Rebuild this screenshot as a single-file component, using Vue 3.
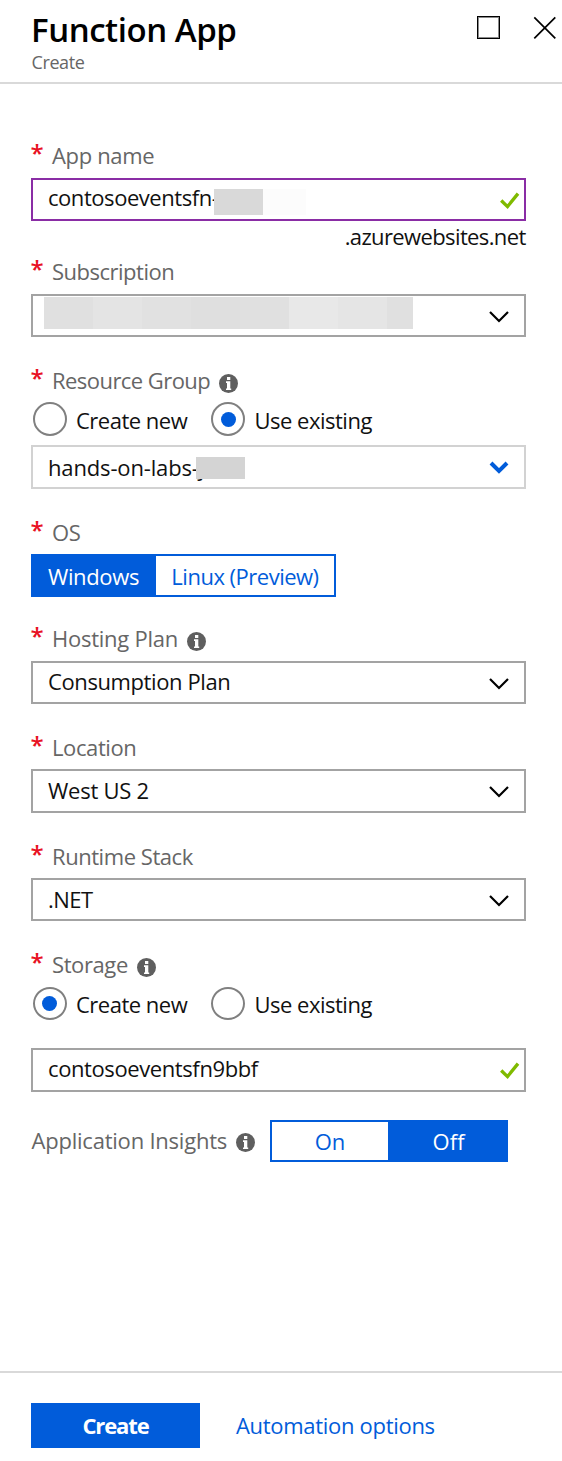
<script setup>
const chevron = 'M2 2 L11 11 L20 2'
const infoGlyph = 'M8 3h3.3v3H8zM7 7.3h4.3v7.2h.9v1.5H7v-1.5h1V9H7z'
</script>

<template>
  <div class="blade">
    <header class="head">
      <div>
        <h1><span class="t-title">Function App</span></h1>
        <p class="sub"><span class="t-sub">Create</span></p>
      </div>
      <div class="window-actions">
        <i class="maximize"></i>
        <svg class="close" width="24" height="24" viewBox="0 0 24 24"><path d="M1.3 1.3 L22.3 22.3 M22.3 1.3 L1.3 22.3" /></svg>
      </div>
    </header>

    <main>
      <section class="field f-name">
        <label><b class="star">*</b><span class="t-appname">App name</span></label>
        <div class="box focus v-name">
          <span class="t-fn">contosoeventsfn-</span>
          <i class="mask mask-name"></i>
          <svg class="check" width="20" height="18" viewBox="0 0 20 18"><path d="M1.2 8.5 L7.5 14.6 L18 1.6" /></svg>
        </div>
        <div class="suffix"><span class="t-suffix">.azurewebsites.net</span></div>
      </section>

      <section class="field f-subscription">
        <label><b class="star">*</b><span class="t-subscription">Subscription</span></label>
        <div class="box">
          <i class="mask mask-subscription"></i>
          <svg class="chev" width="22" height="13" viewBox="0 0 22 13"><path :d="chevron" /></svg>
        </div>
      </section>

      <section class="field f-group">
        <label><b class="star">*</b><span class="t-rg">Resource Group</span>
          <svg class="info" width="19" height="19" viewBox="0 0 19 19"><circle cx="9.5" cy="9.5" r="9.5" /><path :d="infoGlyph" /></svg>
        </label>
        <div class="radios">
          <i class="radio"></i><span class="t-cn">Create new</span>
          <i class="radio on"></i><span class="t-ue">Use existing</span>
        </div>
        <div class="box pale v-group">
          <span class="t-hands">hands-on-labs-j</span>
          <i class="mask mask-group"></i>
          <svg class="chev bold" width="20" height="14" viewBox="0 0 20 14"><path d="M2 2 L10 10 L18 2" /></svg>
        </div>
      </section>

      <section class="field f-os">
        <label><b class="star">*</b><span class="t-os">OS</span></label>
        <div class="toggle os">
          <span class="seg active"><span class="t-win">Windows</span></span>
          <span class="seg"><span class="t-linux">Linux (Preview)</span></span>
        </div>
      </section>

      <section class="field f-hosting">
        <label><b class="star">*</b><span class="t-host">Hosting Plan</span>
          <svg class="info" width="19" height="19" viewBox="0 0 19 19"><circle cx="9.5" cy="9.5" r="9.5" /><path :d="infoGlyph" /></svg>
        </label>
        <div class="box v-hosting">
          <span class="t-cons">Consumption Plan</span>
          <svg class="chev" width="22" height="13" viewBox="0 0 22 13"><path :d="chevron" /></svg>
        </div>
      </section>

      <section class="field f-location">
        <label><b class="star">*</b><span class="t-loc">Location</span></label>
        <div class="box tall v-location">
          <span class="t-west">West US 2</span>
          <svg class="chev" width="22" height="13" viewBox="0 0 22 13"><path :d="chevron" /></svg>
        </div>
      </section>

      <section class="field f-runtime">
        <label><b class="star">*</b><span class="t-run">Runtime Stack</span></label>
        <div class="box v-runtime">
          <span class="t-net">.NET</span>
          <svg class="chev" width="22" height="13" viewBox="0 0 22 13"><path :d="chevron" /></svg>
        </div>
      </section>

      <section class="field f-storage">
        <label><b class="star">*</b><span class="t-storage">Storage</span>
          <svg class="info" width="19" height="19" viewBox="0 0 19 19"><circle cx="9.5" cy="9.5" r="9.5" /><path :d="infoGlyph" /></svg>
        </label>
        <div class="radios">
          <i class="radio on"></i><span class="t-cn">Create new</span>
          <i class="radio"></i><span class="t-ue">Use existing</span>
        </div>
        <div class="box tall v-storage">
          <span class="t-fn9">contosoeventsfn9bbf</span>
          <svg class="check" width="20" height="18" viewBox="0 0 20 18"><path d="M1.2 8.5 L7.5 14.6 L18 1.6" /></svg>
        </div>
      </section>

      <section class="insights">
        <span class="t-ai">Application Insights</span>
        <svg class="info" width="19" height="19" viewBox="0 0 19 19"><circle cx="9.5" cy="9.5" r="9.5" /><path :d="infoGlyph" /></svg>
        <div class="toggle ai">
          <span class="seg"><span class="t-on">On</span></span>
          <span class="seg active"><span class="t-off">Off</span></span>
        </div>
      </section>
    </main>

    <footer>
      <button type="button"><span class="t-create">Create</span></button>
      <a><span class="t-auto">Automation options</span></a>
    </footer>
  </div>
</template>

<style>
body { background: #fff; }
</style>

<style scoped>
.blade {
  width: 562px;
  height: 1461px;
  display: flex;
  flex-direction: column;
  overflow: hidden;
  background: #fff;
  color: #111;
  font-family: "Open Sans", "Noto Sans", sans-serif;
  font-size: 22px;
  line-height: 32px;
  letter-spacing: -0.4px;
  white-space: nowrap;
}
* { box-sizing: border-box; }
i { display: block; flex: none; }
svg { display: block; flex: none; fill: none; }

.head {
  flex: none;
  height: 84px;
  border-bottom: 2px solid #d9d9d9;
  padding: 8px 5px 0 31px;
  display: flex;
  justify-content: space-between;
}
h1 { margin: 0; font-size: 33px; line-height: 44px; font-weight: 600; color: #000; letter-spacing: -0.45px; }
.sub { margin: 0; padding-left: 0.5px; font-size: 18px; line-height: 20px; color: #666; }
.window-actions { display: flex; gap: 33px; padding-top: 8px; }
.maximize { width: 23px; height: 23px; border: 1px solid #000; box-shadow: inset 0 0 0 1px #8a8a8a; }
.close { stroke: #000; stroke-width: 1.7; }

main { flex: 1; padding: 0 36px 0 31px; }
.field { display: flex; flex-direction: column; }
label {
  display: flex;
  align-items: center;
  height: 32px;
  margin-bottom: 6px;
  color: #666;
}
.star { width: 21px; height: 32px; margin-top: -4px; color: #e81123; font-weight: 600; font-size: 24px; line-height: 32px; text-indent: -0.5px; }
.info { margin: 5px 0 0 9px; }
.info circle { fill: #5f5f5f; }
.info path { fill: #fff; }

.box {
  position: relative;
  height: 43px;
  border: 2px solid #a3a3a3;
  padding: 0 0 0 15px;
  display: flex;
  color: #111;
}
.tall { height: 44px; }
.focus { border-color: #8a2da5; }
.pale { border-color: #d2d2d2; height: 44px; }
.check { margin: 12px 4px 0 auto; stroke: #7fba00; stroke-width: 3.3; }
.chev { margin: 14px 14px 0 auto; stroke: #000; stroke-width: 2.2; }
.chev.bold { margin: 14px 15.5px 0 auto; stroke: #015cda; stroke-width: 4; }
.mask { position: absolute; }
.mask-name { left: 181px; top: 9px; width: 92px; height: 26px; background: linear-gradient(90deg, #d9d9d9 49px, #fcfcfc 49px); }
.mask-subscription {
  left: 11px; top: 1px; width: 369px; height: 32px;
  background: linear-gradient(90deg, #e0e0e0 49px, #e4e4e4 49px 98px, #e1e1e1 98px 147px, #dfdfdf 147px 196px, #e0e0e0 196px 245px, #e8e8e8 245px 294px, #e5e5e5 294px 343px, #e0e0e0 343px);
}
.mask-group { left: 163px; top: 10px; width: 49px; height: 22px; background: #d4d4d4; }

.f-name { padding-top: 55px; }
.f-name label, .f-subscription label, .f-hosting label { margin-bottom: 7px; }
.suffix { display: flex; justify-content: flex-end; height: 34px; line-height: 30px; }
.f-group { padding-top: 27px; }
.f-group label { margin-bottom: 6px; }
.f-os { padding-top: 27px; }
.f-hosting { padding-top: 25px; }
.f-location { padding-top: 27px; }
.f-runtime { padding-top: 27px; }
.f-storage { padding-top: 27px; }
.f-storage label { margin-bottom: 6.5px; }
.f-hosting .info, .f-group .info, .f-storage .info { margin-top: 6px; }

.v-name > span { margin-top: 1px; }
.v-group > span { margin-top: 4px; }
.v-hosting > span { margin-top: 2px; }
.v-location > span { margin-top: 3px; }
.v-runtime > span { margin-top: 3px; }
.v-storage > span { margin-top: 2px; }

.radios { display: flex; height: 43px; padding-left: 2px; }
.radio { width: 34px; height: 34px; border: 2px solid #808080; border-radius: 50%; margin-right: 9px; }
.radio.on::after { content: ""; display: block; width: 15px; height: 15px; margin: 7.5px; border-radius: 50%; background: #015cda; }
.radios span { margin-top: 2px; }
.f-storage .radios { height: 61.5px; }
.f-storage .radios span { margin-top: 1px; }
.f-storage .radio { height: 33px; }
.f-storage .radio.on::after { margin: 7px 7px; }
.t-cn { width: 135px; }

.t-appname { letter-spacing: -0.35px; }
.t-subscription, .t-cn, .t-ue, .t-net { letter-spacing: -0.5px; }
.t-ue { padding-left: 0.5px; }
.t-rg { letter-spacing: -0.55px; }
.t-host, .t-west { letter-spacing: -0.25px; }
.t-fn { letter-spacing: -0.45px; }
.t-run { letter-spacing: -0.45px; }
.t-suffix { letter-spacing: -0.62px; margin-right: 0.3px; }
.t-win { letter-spacing: -0.35px; margin-left: -4px; }
.t-linux { letter-spacing: -0.5px; }
.t-hands { letter-spacing: -0.15px; }
.t-ai { letter-spacing: -0.22px; padding-left: 0.5px; }
.t-auto { letter-spacing: -0.3px; }
.t-create { letter-spacing: -1.1px; }
.t-on, .t-off { letter-spacing: 0; }
.t-off { margin-left: 3px; }

.toggle { display: flex; border: 2px solid #015cda; color: #015cda; }
.seg { display: flex; justify-content: center; align-items: center; }
.active { background: #015cda; color: #fff; }
.os { width: 305px; height: 43px; }
.os .seg:first-child { width: 123px; padding-left: 2px; }
.os .seg:last-child { flex: 1; padding-top: 1px; }
.os .active { padding-top: 1px; }
.insights { display: flex; align-items: flex-start; padding-top: 28px; color: #666; }
.insights > span { margin-top: 4px; }
.insights .info { margin-top: 13px; }
.ai { width: 238px; height: 42px; margin-left: auto; margin-right: 18px; }
.ai .seg:first-child { width: 116px; }
.ai .seg:last-child { flex: 1; }

footer {
  flex: none;
  height: 90px;
  border-top: 2px solid #d9d9d9;
  display: flex;
  padding: 30px 0 0 31px;
}
button { width: 169px; height: 45px; border: 0; padding: 0 0 1px; background: #015cda; color: #fff; font: inherit; font-weight: 700; }
a { margin: 6px 0 0 36px; color: #015cda; }
</style>
